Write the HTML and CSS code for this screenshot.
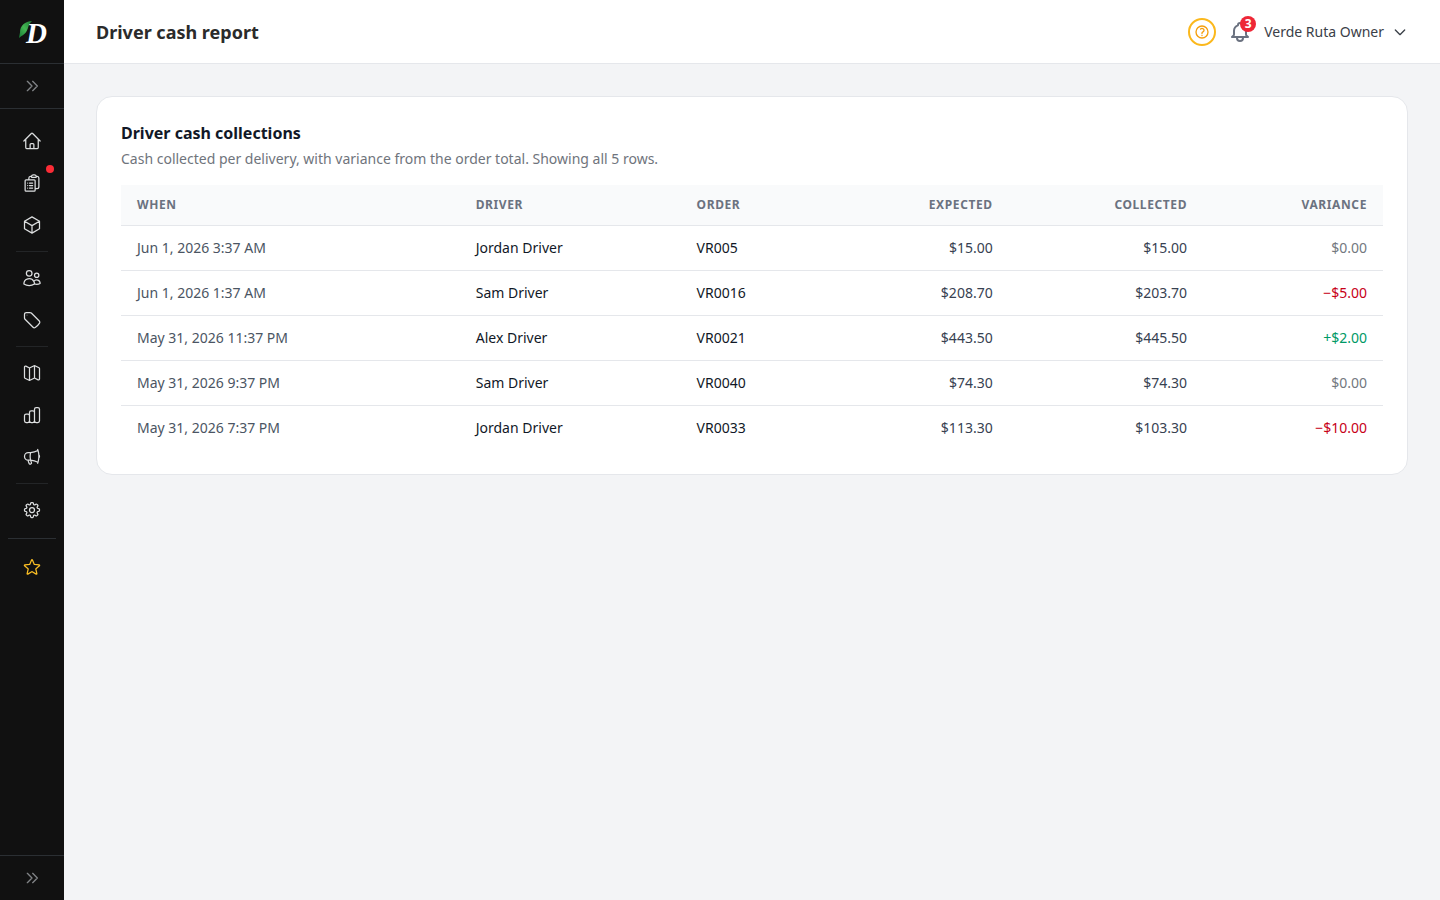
FILE: index.html
```html
<!DOCTYPE html>
<html lang="en">
<head>
<meta charset="utf-8">
<meta name="viewport" content="width=device-width, initial-scale=1">
<title>Driver cash report</title>
<link rel="stylesheet" href="styles.css">
</head>
<body>
<div class="app">
  <aside class="sidebar">
    <a class="brand" href="#" aria-label="Dashboard">
      <svg class="logo" viewBox="0 0 32 32" aria-hidden="true">
        <defs>
          <linearGradient id="leaf" x1="1" y1="0" x2="0" y2="1">
            <stop offset="0" stop-color="#1d7a35"/>
            <stop offset="0.5" stop-color="#43b552"/>
            <stop offset="1" stop-color="#167a35"/>
          </linearGradient>
        </defs>
        <text class="logo-letter" x="10" y="27">D</text>
        <path fill="url(#leaf)" d="M16 5C9 5.500 4 9.500 4 16.500L3 22C6.500 19 10 18 11.800 12.500C12.800 9 14 6.800 16 5Z"/>
      </svg>
    </a>
    <button class="toggle" type="button" aria-label="Expand sidebar">
      <svg class="icon-sm" viewBox="0 0 24 24"><path d="M13 5l7 7-7 7M5 5l7 7-7 7"/></svg>
    </button>
    <nav class="nav" aria-label="Main">
      <a class="nav-item" href="#" aria-label="Home"><svg class="icon" viewBox="0 0 24 24"><path d="m2.250 12 8.954-8.955c.44-.439 1.152-.439 1.591 0L21.750 12M4.500 9.750v10.125c0 .621.504 1.125 1.125 1.125H9.750v-4.875c0-.621.504-1.125 1.125-1.125h2.250c.621 0 1.125.504 1.125 1.125V21h4.125c.621 0 1.125-.504 1.125-1.125V9.750M8.250 21h8.250"/></svg></a>
      <a class="nav-item" href="#" aria-label="Orders"><svg class="icon" viewBox="0 0 24 24"><path d="M9 12h3.750M9 15h3.750M9 18h3.750m3 .75H18a2.250 2.250 0 0 0 2.250-2.250V6.108c0-1.135-.845-2.098-1.976-2.192a48.424 48.424 0 0 0-1.123-.08m-5.801 0c-.065.21-.1.433-.1.664 0 .414.336.75.75.75h4.500a.75.75 0 0 0 .75-.75 2.250 2.250 0 0 0-.1-.664m-5.800 0A2.251 2.251 0 0 1 13.500 2.250H15c1.012 0 1.867.668 2.150 1.586m-5.800 0c-.376.023-.75.05-1.124.08C9.095 4.010 8.250 4.973 8.250 6.108V8.250m0 0H4.875c-.621 0-1.125.504-1.125 1.125v11.250c0 .621.504 1.125 1.125 1.125h9.750c.621 0 1.125-.504 1.125-1.125V9.375c0-.621-.504-1.125-1.125-1.125H8.250ZM6.750 12h.008v.008H6.750V12Zm0 3h.008v.008H6.750V15Zm0 3h.008v.008H6.750V18Z"/></svg><span class="dot"></span></a>
      <a class="nav-item" href="#" aria-label="Products"><svg class="icon" viewBox="0 0 24 24"><path d="m21 7.500-9-5.250L3 7.500m18 0-9 5.250m9-5.250v9l-9 5.250M3 7.500l9 5.250M3 7.500v9l9 5.250m0-9v9"/></svg></a>
      <hr class="nav-rule">
      <a class="nav-item" href="#" aria-label="Customers"><svg class="icon" viewBox="0 0 24 24"><path d="M15 19.128a9.380 9.380 0 0 0 2.625.372 9.337 9.337 0 0 0 4.121-.952 4.125 4.125 0 0 0-7.533-2.493M15 19.128v-.003c0-1.113-.285-2.160-.786-3.070M15 19.128v.106A12.318 12.318 0 0 1 8.624 21c-2.331 0-4.512-.645-6.374-1.766l-.001-.109a6.375 6.375 0 0 1 11.964-3.070M12 6.375a3.375 3.375 0 1 1-6.750 0 3.375 3.375 0 0 1 6.750 0Zm8.250 2.250a2.625 2.625 0 1 1-5.250 0 2.625 2.625 0 0 1 5.250 0Z"/></svg></a>
      <a class="nav-item" href="#" aria-label="Promotions"><svg class="icon" viewBox="0 0 24 24"><path d="M9.568 3H5.250A2.250 2.250 0 0 0 3 5.250v4.318c0 .597.237 1.170.659 1.591l9.581 9.581c.699.699 1.780.872 2.607.33a18.095 18.095 0 0 0 5.223-5.223c.542-.827.369-1.908-.33-2.607L11.160 3.660A2.250 2.250 0 0 0 9.568 3Z"/><path class="faint" d="M6 6h.008v.008H6V6Z"/></svg></a>
      <hr class="nav-rule">
      <a class="nav-item" href="#" aria-label="Map"><svg class="icon" viewBox="0 0 24 24"><path d="M9 6v14.500M15 3.500V18M4.600 3.800 8.500 5.750a1.100 1.100 0 0 0 1 0l5-2.500a1.100 1.100 0 0 1 1 0l4.900 2.450c.38.19.6.58.6 1v12.500c0 .84-.88 1.380-1.630 1l-3.870-1.930a1.100 1.100 0 0 0-1 0l-5 2.500a1.100 1.100 0 0 1-1 0l-4.900-2.450a1.100 1.100 0 0 1-.6-1V4.800c0-.84.88-1.380 1.600-1Z"/></svg></a>
      <a class="nav-item" href="#" aria-label="Reports"><svg class="icon" viewBox="0 0 24 24"><path d="M9 19a2 2 0 0 1-2 2H5a2 2 0 0 1-2-2v-6a2 2 0 0 1 2-2h2a2 2 0 0 1 2 2v6Zm0 0V9a2 2 0 0 1 2-2h2a2 2 0 0 1 2 2v10M9 19a2 2 0 0 0 2 2h2a2 2 0 0 0 2-2m0 0V5a2 2 0 0 1 2-2h2a2 2 0 0 1 2 2v14a2 2 0 0 1-2 2h-2a2 2 0 0 1-2-2Z"/></svg></a>
      <a class="nav-item" href="#" aria-label="Marketing"><svg class="icon" viewBox="0 0 24 24"><path d="M10.340 15.840c-.688-.06-1.386-.09-2.090-.09H7.500a4.500 4.500 0 1 1 0-9h.75c.704 0 1.402-.03 2.090-.09m0 9.180c.253.962.584 1.892.985 2.783.247.55.06 1.210-.463 1.511l-.657.38c-.551.318-1.260.117-1.527-.461a20.845 20.845 0 0 1-1.440-4.282m3.102.069a18.030 18.030 0 0 1-.59-4.590c0-1.586.205-3.124.59-4.590m0 9.180a23.848 23.848 0 0 1 8.835 2.535M10.340 6.660a23.847 23.847 0 0 0 8.835-2.535m0 0A23.740 23.740 0 0 0 18.795 3m.38 1.125a23.910 23.910 0 0 1 1.014 5.395m-1.014 8.855c-.118.38-.245.754-.38 1.125m.38-1.125a23.910 23.910 0 0 0 1.014-5.395m0-3.460c.495.413.811 1.035.811 1.730 0 .695-.316 1.317-.811 1.730m0-3.460a24.347 24.347 0 0 1 0 3.460"/></svg></a>
      <hr class="nav-rule">
      <a class="nav-item" href="#" aria-label="Settings"><svg class="icon" viewBox="0 0 24 24"><path d="M10.343 3.940c.09-.542.56-.94 1.110-.94h1.093c.55 0 1.020.398 1.110.94l.149.894c.07.424.384.764.78.93.398.164.855.142 1.205-.108l.737-.527a1.125 1.125 0 0 1 1.450.12l.773.774c.39.389.44 1.002.12 1.450l-.527.737c-.25.35-.272.806-.107 1.204.165.397.505.71.93.78l.893.15c.543.09.94.559.94 1.109v1.094c0 .55-.397 1.020-.94 1.110l-.894.149c-.424.07-.764.383-.929.78-.165.398-.143.854.107 1.204l.527.738c.32.447.269 1.060-.12 1.450l-.774.773a1.125 1.125 0 0 1-1.449.12l-.738-.527c-.35-.25-.806-.272-1.203-.107-.398.165-.71.505-.781.929l-.149.894c-.09.542-.56.94-1.110.94h-1.094c-.55 0-1.019-.398-1.110-.94l-.148-.894c-.071-.424-.384-.764-.781-.93-.398-.164-.854-.142-1.204.108l-.738.527c-.447.32-1.060.269-1.450-.12l-.773-.774a1.125 1.125 0 0 1-.12-1.450l.527-.737c.25-.35.272-.806.108-1.204-.165-.397-.506-.71-.93-.78l-.894-.15c-.542-.09-.94-.56-.94-1.109v-1.094c0-.55.398-1.020.94-1.110l.894-.149c.424-.07.765-.383.93-.78.165-.398.143-.854-.108-1.204l-.526-.738a1.125 1.125 0 0 1 .12-1.450l.773-.773a1.125 1.125 0 0 1 1.450-.12l.737.527c.35.25.807.272 1.204.107.397-.165.71-.505.78-.929l.15-.894Z"/><path d="M15 12a3 3 0 1 1-6 0 3 3 0 0 1 6 0Z"/></svg></a>
    </nav>
    <div class="extras">
      <a class="nav-item nav-item-star" href="#" aria-label="Upgrade"><svg class="icon" viewBox="0 0 24 24"><path d="M11.480 3.499a.562.562 0 0 1 1.040 0l2.125 5.111a.563.563 0 0 0 .475.345l5.518.442c.499.04.701.663.321.988l-4.204 3.602a.563.563 0 0 0-.182.557l1.285 5.385a.562.562 0 0 1-.84.61l-4.725-2.885a.562.562 0 0 0-.586 0L6.982 20.540a.562.562 0 0 1-.84-.61l1.285-5.386a.562.562 0 0 0-.182-.557l-4.204-3.602a.562.562 0 0 1 .321-.988l5.518-.442a.563.563 0 0 0 .475-.345L11.480 3.500Z"/></svg></a>
    </div>
    <button class="toggle toggle-bottom" type="button" aria-label="Expand menu">
      <svg class="icon-sm" viewBox="0 0 24 24"><path d="M13 5l7 7-7 7M5 5l7 7-7 7"/></svg>
    </button>
  </aside>

  <div class="page">
    <header class="topbar">
      <h1 class="page-title">Driver cash report</h1>
      <div class="actions">
        <button class="help" type="button" aria-label="Help">
          <svg class="icon-sm" viewBox="0 0 24 24"><path d="M9.879 7.519c1.171-1.025 3.071-1.025 4.242 0 1.172 1.025 1.172 2.687 0 3.712-.203.179-.43.326-.67.442-.745.361-1.450.999-1.450 1.827v.75M21 12a9 9 0 1 1-18 0 9 9 0 0 1 18 0Zm-9 5.250h.008v.008H12v-.008Z"/></svg>
        </button>
        <button class="bell" type="button" aria-label="Notifications">
          <svg class="icon-lg" viewBox="0 0 24 24"><path d="M15 17h5l-1.405-1.405A2.032 2.032 0 0 1 18 14.158V11a6.002 6.002 0 0 0-4-5.659V5a2 2 0 1 0-4 0v.341C7.670 6.165 6 8.388 6 11v3.159c0 .538-.214 1.055-.595 1.436L4 17h5m6 0v1a3 3 0 1 1-6 0v-1m6 0H9"/></svg>
          <span class="badge">3</span>
        </button>
        <button class="account" type="button">
          <span>Verde Ruta Owner</span>
          <svg class="icon-sm" viewBox="0 0 24 24"><path d="M19 9l-7 7-7-7"/></svg>
        </button>
      </div>
    </header>

    <main class="content">
      <section class="card">
        <h2 class="card-title">Driver cash collections</h2>
        <p class="card-text">Cash collected per delivery, with variance from the order total. Showing all 5 rows.</p>
        <table class="table">
          <colgroup>
            <col class="col-when"><col class="col-driver"><col class="col-order"><col class="col-expected"><col class="col-collected"><col class="col-variance">
          </colgroup>
          <thead>
            <tr><th>When</th><th>Driver</th><th>Order</th><th class="num">Expected</th><th class="num">Collected</th><th class="num">Variance</th></tr>
          </thead>
          <tbody>
            <tr><td class="when">Jun 1, 2026 3:37 AM</td><td>Jordan Driver</td><td>VR005</td><td class="num">$15.00</td><td class="num">$15.00</td><td class="num even">$0.00</td></tr>
            <tr><td class="when">Jun 1, 2026 1:37 AM</td><td>Sam Driver</td><td>VR0016</td><td class="num">$208.70</td><td class="num">$203.70</td><td class="num short">−$5.00</td></tr>
            <tr><td class="when">May 31, 2026 11:37 PM</td><td>Alex Driver</td><td>VR0021</td><td class="num">$443.50</td><td class="num">$445.50</td><td class="num over">+$2.00</td></tr>
            <tr><td class="when">May 31, 2026 9:37 PM</td><td>Sam Driver</td><td>VR0040</td><td class="num">$74.30</td><td class="num">$74.30</td><td class="num even">$0.00</td></tr>
            <tr><td class="when">May 31, 2026 7:37 PM</td><td>Jordan Driver</td><td>VR0033</td><td class="num">$113.30</td><td class="num">$103.30</td><td class="num short">−$10.00</td></tr>
          </tbody>
        </table>
      </section>
    </main>
  </div>
</div>
</body>
</html>
```
FILE: styles.css
```css
*, *::before, *::after { box-sizing: border-box; }

body {
  margin: 0;
  background: #f3f4f6;
  color: #111827;
  font-family: "Noto Sans", "Open Sans", sans-serif;
  font-size: 14px;
  line-height: 20px;
}

h1, h2, p { margin: 0; }

button {
  margin: 0;
  padding: 0;
  border: 0;
  background: none;
  color: inherit;
  font: inherit;
  cursor: pointer;
}

svg { display: block; }

.icon, .icon-sm, .icon-lg {
  flex: none;
  fill: none;
  stroke: currentColor;
  stroke-linecap: round;
  stroke-linejoin: round;
}
.icon { width: 20px; height: 20px; stroke-width: 1.5; }
.icon-sm { width: 16px; height: 16px; stroke-width: 2; }
.icon-lg { width: 24px; height: 24px; stroke-width: 2; }
.faint { opacity: 0.5; }

.app { display: flex; min-height: 100vh; }

/* Sidebar */
.sidebar {
  display: flex;
  flex: none;
  flex-direction: column;
  width: 64px;
  background: #111111;
  color: #e5e7eb;
}
.brand {
  display: flex;
  align-items: center;
  justify-content: center;
  height: 64px;
  border-bottom: 1px solid #2b2f33;
}
.logo { width: 32px; height: 32px; overflow: visible; }
.logo-letter {
  fill: #ffffff;
  font-family: "Liberation Serif", serif;
  font-size: 29px;
  font-style: italic;
  font-weight: 700;
}
.toggle {
  display: flex;
  align-items: center;
  justify-content: center;
  height: 45px;
  border-bottom: 1px solid #2b2f33;
  color: #808386;
}
.toggle-bottom {
  margin-top: auto;
  border-top: 1px solid #2b2f33;
  border-bottom: 0;
}
.nav {
  display: flex;
  flex-direction: column;
  gap: 2px;
  padding: 12px 8px 8px;
}
.nav-item {
  position: relative;
  display: flex;
  align-items: center;
  justify-content: center;
  height: 40px;
  border-radius: 8px;
  color: #dcdedf;
}
.nav-item-star { color: #fbbf24; }
.nav-rule {
  align-self: stretch;
  height: 1px;
  margin: 4px 8px;
  border: 0;
  background: #232527;
}
.dot {
  position: absolute;
  top: 2px;
  right: 2px;
  width: 8px;
  height: 8px;
  border-radius: 50%;
  background: #fb2c36;
}
.extras {
  margin: 0 8px;
  padding-top: 8px;
  border-top: 1px solid #2b2f33;
}

/* Top bar */
.page { flex: 1; min-width: 0; }
.topbar {
  display: flex;
  align-items: center;
  justify-content: space-between;
  height: 64px;
  padding: 0 32px;
  border-bottom: 1px solid #e5e7eb;
  background: #ffffff;
}
.page-title {
  color: #2b2b2b;
  font-size: 18px;
  font-weight: 700;
  line-height: 28px;
}
.actions { display: flex; align-items: center; gap: 12px; }
.help {
  display: flex;
  align-items: center;
  justify-content: center;
  width: 28px;
  height: 28px;
  border: 2px solid #fbb81c;
  border-radius: 50%;
  color: #f59e0b;
}
.bell { position: relative; color: #6b7280; }
.badge {
  position: absolute;
  top: -4px;
  right: -4px;
  width: 16px;
  height: 16px;
  border-radius: 50%;
  background: #ee2737;
  color: #ffffff;
  font-size: 12px;
  font-weight: 700;
  line-height: 16px;
  text-align: center;
}
.account {
  display: flex;
  align-items: center;
  gap: 8px;
  color: #3b4048;
}

/* Report card */
.content { padding: 32px; }
.card {
  padding: 24px;
  border: 1px solid #e5e7eb;
  border-radius: 16px;
  background: #ffffff;
}
.card-title {
  font-size: 16px;
  font-weight: 700;
  line-height: 24px;
}
.card-text { margin-top: 4px; color: #6f747c; }

.table {
  width: 100%;
  margin-top: 16px;
  border-collapse: separate;
  border-spacing: 0;
  table-layout: fixed;
}
.col-when { width: 26.84%; }
.col-driver { width: 17.5%; }
.col-order { width: 11%; }
.col-expected { width: 15%; }
.col-collected { width: 15.4%; }
.table th, .table td {
  padding: 12px 16px;
  border-bottom: 1px solid #e5e7eb;
  text-align: left;
}
.table th {
  background: #f9fafb;
  color: #6b7280;
  font-size: 12px;
  font-weight: 700;
  letter-spacing: 0.05em;
  line-height: 16px;
  text-transform: uppercase;
}
.table tbody tr:last-child td { border-bottom: 0; }
.table .num { text-align: right; }
.table td.num { color: #374151; }
.table td.when { color: #4b5563; }
.table td.even { color: #737880; }
.table td.short { color: #c70018; }
.table td.over { color: #009966; }
```
